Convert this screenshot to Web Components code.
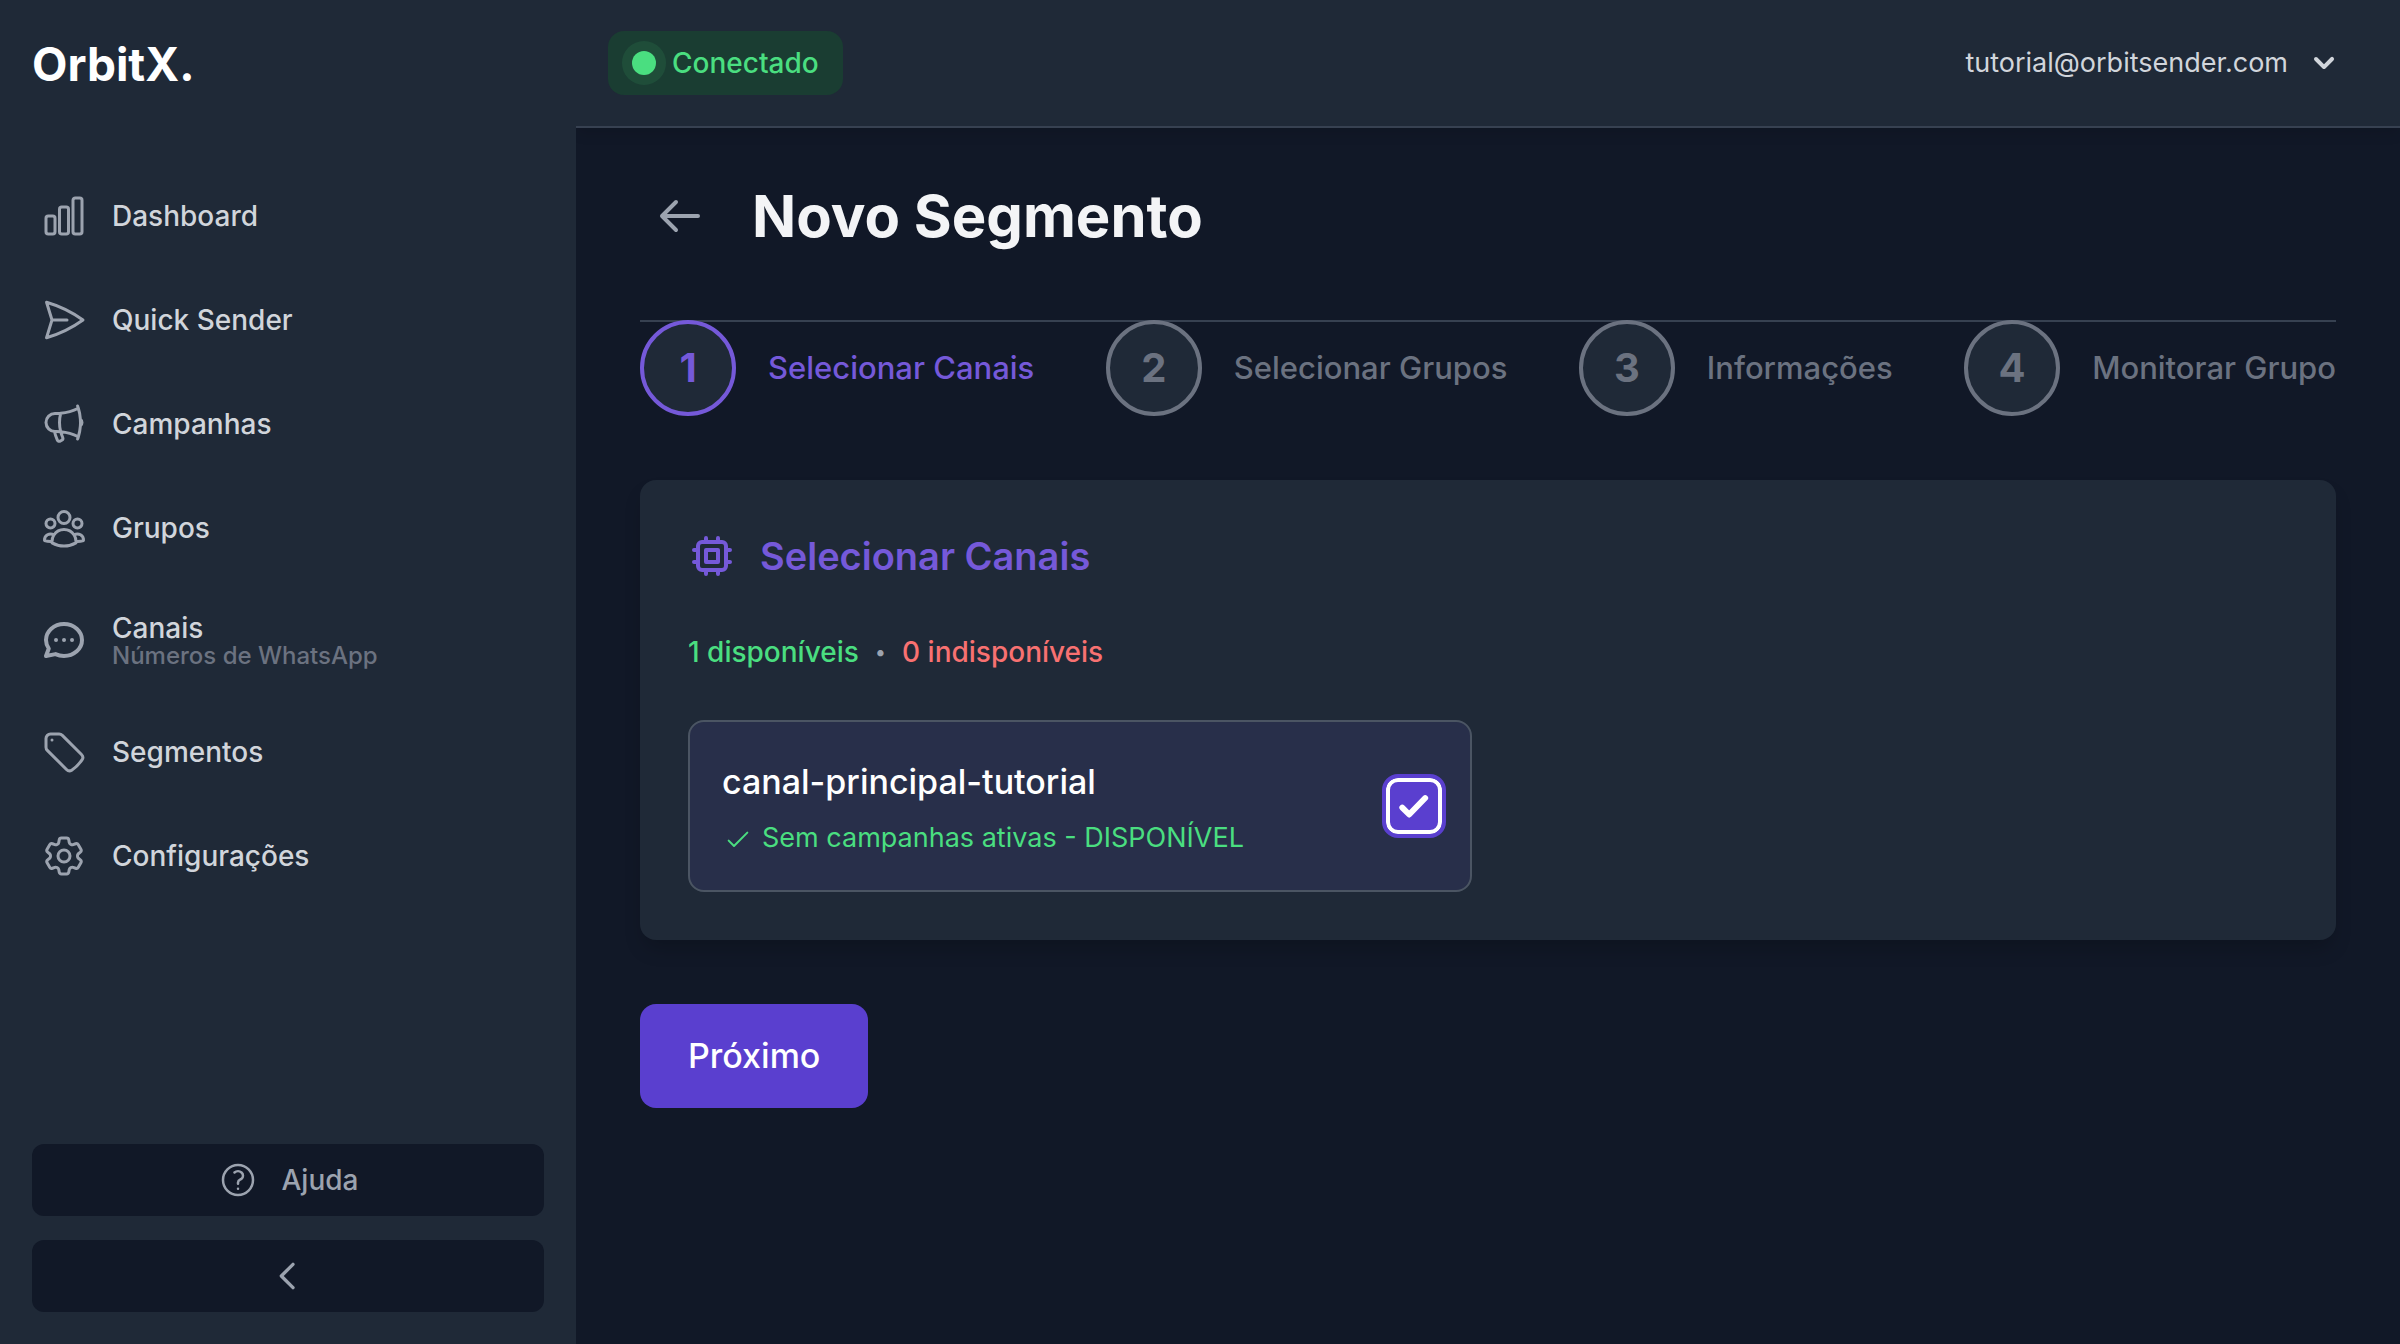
<!DOCTYPE html>
<html lang="pt-BR">
<head>
<meta charset="utf-8">
<title>OrbitX</title>
<style>
  html, body {
    margin: 0;
    min-height: 100vh;
    background: #111827;
    color: #d1d5db;
    font-family: Inter, "Liberation Sans", sans-serif;
    font-size: 28px;
    line-height: 40px;
  }
</style>
</head>
<body>
<app-shell>
  <side-bar slot="sidebar">
    <nav-item icon="chart">Dashboard</nav-item>
    <nav-item icon="send">Quick Sender</nav-item>
    <nav-item icon="megaphone">Campanhas</nav-item>
    <nav-item icon="users">Grupos</nav-item>
    <nav-item icon="chat" hint="Números de WhatsApp">Canais</nav-item>
    <nav-item icon="tag">Segmentos</nav-item>
    <nav-item icon="cog">Configurações</nav-item>
  </side-bar>
  <top-bar slot="header" email="tutorial@orbitsender.com">Conectado</top-bar>
  <page-title>Novo Segmento</page-title>
  <step-list>
    <step-item number="1" active>Selecionar Canais</step-item>
    <step-item number="2">Selecionar Grupos</step-item>
    <step-item number="3">Informações</step-item>
    <step-item number="4">Monitorar Grupo</step-item>
  </step-list>
  <channel-panel heading="Selecionar Canais" available="1" unavailable="0">
    <channel-card name="canal-principal-tutorial">Sem campanhas ativas - DISPONÍVEL</channel-card>
  </channel-panel>
  <primary-button>Próximo</primary-button>
</app-shell>

<script>
const ICONS = {
  chart: '<path d="M3 13.125C3 12.504 3.504 12 4.125 12h2.25c.621 0 1.125.504 1.125 1.125v6.75C7.5 20.496 6.996 21 6.375 21h-2.25A1.125 1.125 0 0 1 3 19.875v-6.75ZM9.75 8.625c0-.621.504-1.125 1.125-1.125h2.25c.621 0 1.125.504 1.125 1.125v11.25c0 .621-.504 1.125-1.125 1.125h-2.25a1.125 1.125 0 0 1-1.125-1.125V8.625ZM16.5 4.125c0-.621.504-1.125 1.125-1.125h2.25C20.496 3 21 3.504 21 4.125v15.75c0 .621-.504 1.125-1.125 1.125h-2.25a1.125 1.125 0 0 1-1.125-1.125V4.125Z"/>',
  send: '<path d="M6 12 3.269 3.125A59.769 59.769 0 0 1 21.485 12 59.768 59.768 0 0 1 3.27 20.875L5.999 12Zm0 0h7.5"/>',
  megaphone: '<path d="M10.34 15.84c-.688-.06-1.386-.09-2.09-.09H7.5a4.5 4.5 0 1 1 0-9h.75c.704 0 1.402-.03 2.09-.09m0 9.18c.253.962.584 1.892.985 2.783.247.55.06 1.21-.463 1.511l-.657.38c-.551.318-1.26.117-1.527-.461a20.845 20.845 0 0 1-1.44-4.282m3.102.069a18.03 18.03 0 0 1-.59-4.59c0-1.586.205-3.124.59-4.59m0 9.18a23.848 23.848 0 0 1 8.835 2.535M10.34 6.66a23.847 23.847 0 0 0 8.835-2.535m0 0A23.74 23.74 0 0 0 18.795 3m.38 1.125a23.91 23.91 0 0 1 1.014 5.395m-1.014 8.855c-.118.38-.245.754-.38 1.125m.38-1.125a23.91 23.91 0 0 0 1.014-5.395m0-3.46c.495.413.811 1.035.811 1.73 0 .695-.316 1.317-.811 1.73m0-3.46a24.347 24.347 0 0 1 0 3.46"/>',
  users: '<path d="M18 18.72a9.094 9.094 0 0 0 3.741-.479 3 3 0 0 0-4.682-2.72m.94 3.198.001.031c0 .225-.012.447-.037.666A11.944 11.944 0 0 1 12 21c-2.17 0-4.207-.576-5.963-1.584A6.062 6.062 0 0 1 6 18.719m12 0a5.971 5.971 0 0 0-.941-3.197m0 0A5.995 5.995 0 0 0 12 12.75a5.995 5.995 0 0 0-5.058 2.772m0 0a3 3 0 0 0-4.681 2.72 8.986 8.986 0 0 0 3.74.477m.94-3.197a5.971 5.971 0 0 0-.94 3.197M15 6.75a3 3 0 1 1-6 0 3 3 0 0 1 6 0Zm6 3a2.25 2.25 0 1 1-4.5 0 2.25 2.25 0 0 1 4.5 0Zm-13.5 0a2.25 2.25 0 1 1-4.5 0 2.25 2.25 0 0 1 4.5 0Z"/>',
  chat: '<path stroke-width="2" d="M8 12h.01M12 12h.01M16 12h.01M21 12c0 4.418-4.03 8-9 8a9.863 9.863 0 0 1-4.255-.949L3 20l1.395-3.72C3.512 15.042 3 13.574 3 12c0-4.418 4.03-8 9-8s9 3.582 9 8Z"/>',
  tag: '<path d="M9.568 3H5.25A2.25 2.25 0 0 0 3 5.25v4.318c0 .597.237 1.17.659 1.591l9.581 9.581c.699.699 1.78.872 2.607.33a18.095 18.095 0 0 0 5.223-5.223c.542-.827.369-1.908-.33-2.607L11.16 3.66A2.25 2.25 0 0 0 9.568 3Z"/><path d="M6 6h.008v.008H6V6Z"/>',
  cog: '<path d="M9.594 3.94c.09-.542.56-.94 1.11-.94h2.593c.55 0 1.02.398 1.11.94l.213 1.281c.063.374.313.686.645.87.074.04.147.083.22.127.325.196.72.257 1.075.124l1.217-.456a1.125 1.125 0 0 1 1.37.49l1.296 2.247a1.125 1.125 0 0 1-.26 1.431l-1.003.827c-.293.241-.438.613-.43.992a7.723 7.723 0 0 1 0 .255c-.008.378.137.75.43.991l1.004.827c.424.35.534.955.26 1.43l-1.298 2.247a1.125 1.125 0 0 1-1.369.491l-1.217-.456c-.355-.133-.75-.072-1.076.124a6.47 6.47 0 0 1-.22.128c-.331.183-.581.495-.644.869l-.213 1.281c-.09.543-.56.94-1.11.94h-2.594c-.55 0-1.019-.398-1.11-.94l-.213-1.281c-.062-.374-.312-.686-.644-.87a6.52 6.52 0 0 1-.22-.127c-.325-.196-.72-.257-1.076-.124l-1.217.456a1.125 1.125 0 0 1-1.369-.49l-1.297-2.247a1.125 1.125 0 0 1 .26-1.431l1.004-.827c.292-.24.437-.613.43-.991a6.932 6.932 0 0 1 0-.255c.007-.38-.138-.751-.43-.992l-1.004-.827a1.125 1.125 0 0 1-.26-1.43l1.297-2.247a1.125 1.125 0 0 1 1.37-.491l1.216.456c.356.133.751.072 1.076-.124.072-.044.146-.086.22-.128.332-.183.582-.495.644-.869l.214-1.28Z"/><path d="M15 12a3 3 0 1 1-6 0 3 3 0 0 1 6 0Z"/>',
  help: '<path d="M9.879 7.519c1.171-1.025 3.071-1.025 4.242 0 1.172 1.025 1.172 2.687 0 3.712-.203.179-.43.326-.67.442-.745.361-1.45.999-1.45 1.827v.75M21 12a9 9 0 1 1-18 0 9 9 0 0 1 18 0Zm-9 5.25h.008v.008H12v-.008Z"/>',
  left: '<path stroke-width="2" d="m15 19-7-7 7-7"/>',
  back: '<path stroke-width="2" d="m10 19-7-7m0 0 7-7m-7 7h18"/>',
  down: '<path fill="currentColor" stroke="none" d="M6.352 8.752a1.2 1.2 0 0 1 1.696 0L12 12.703l3.952-3.951a1.2 1.2 0 1 1 1.696 1.696l-4.8 4.8a1.2 1.2 0 0 1-1.696 0l-4.8-4.8a1.2 1.2 0 0 1 0-1.696Z"/>',
  chip: '<path stroke-width="2" d="M9 3v2m6-2v2M9 19v2m6-2v2M5 9H3m2 6H3m18-6h-2m2 6h-2M7 19h10a2 2 0 0 0 2-2V7a2 2 0 0 0-2-2H7a2 2 0 0 0-2 2v10a2 2 0 0 0 2 2ZM9 9h6v6H9V9Z"/>',
  check: '<path d="m5 14 4 4L19 8"/>',
  tick: '<path stroke-width="2.2" d="m7.6 12.6 2.6 2.6L16.2 9"/>'
};

// Small base: writes the template into an open shadow root
class BaseElement extends HTMLElement {
  constructor() {
    super();
    this.attachShadow({ mode: 'open' });
  }

  connectedCallback() {
    this.shadowRoot.innerHTML = this.render();
  }
}

class SvgIcon extends BaseElement {
  render() {
    return `
      <style>
        :host { display: block; flex: none; width: 48px; height: 48px; }
        svg { display: block; width: 100%; height: 100%; }
      </style>
      <svg viewBox="0 0 24 24" fill="none" stroke="currentColor" stroke-width="1.5"
        stroke-linecap="round" stroke-linejoin="round" aria-hidden="true">${ICONS[this.getAttribute('name')]}</svg>
    `;
  }
}

class AppShell extends BaseElement {
  render() {
    return `
      <style>
        :host { display: grid; grid-template-columns: 576px 1fr; min-height: 100vh; }
        .content { display: flex; flex-direction: column; min-width: 0; }
        main {
          display: flex;
          flex-direction: column;
          padding: 48px 64px;
        }
      </style>
      <slot name="sidebar"></slot>
      <div class="content">
        <slot name="header"></slot>
        <main><slot></slot></main>
      </div>
    `;
  }
}

class SideBar extends BaseElement {
  render() {
    return `
      <style>
        :host {
          display: flex;
          flex-direction: column;
          box-sizing: border-box;
          padding: 32px;
          background: #1f2937;
          z-index: 1;
        }
        .logo {
          color: #fff;
          font-size: 46px;
          line-height: 64px;
          font-weight: 700;
          text-decoration: none;
        }
        nav { display: flex; flex-direction: column; gap: 16px; margin-top: 76px; }
        .actions { display: flex; flex-direction: column; gap: 24px; margin-top: auto; }
        button {
          display: flex;
          align-items: center;
          justify-content: center;
          gap: 24px;
          height: 72px;
          border: 0;
          border-radius: 12px;
          background: #111827;
          color: #9ca3af;
          font: inherit;
          font-weight: 500;
          cursor: pointer;
        }
        svg-icon { width: 40px; height: 40px; }
      </style>
      <a class="logo" href="#">OrbitX.</a>
      <nav><slot></slot></nav>
      <div class="actions">
        <button type="button"><svg-icon name="help"></svg-icon>Ajuda</button>
        <button type="button" aria-label="Recolher menu"><svg-icon name="left"></svg-icon></button>
      </div>
    `;
  }
}

class NavItem extends BaseElement {
  render() {
    const hint = this.getAttribute('hint');
    return `
      <style>
        :host { display: block; }
        a {
          display: flex;
          align-items: center;
          gap: 24px;
          padding: 20px 8px;
          color: #d1d5db;
          font-weight: 500;
          text-decoration: none;
        }
        svg-icon { color: #9ca3af; }
        .text { display: flex; flex-direction: column; }
        .text.double { padding: 4px 0; line-height: 32px; }
        small { color: #6b7280; font-size: 24px; line-height: 24px; }
      </style>
      <a href="#">
        <svg-icon name="${this.getAttribute('icon')}"></svg-icon>
        <span class="text ${hint ? 'double' : ''}">
          <slot></slot>
          ${hint ? `<small>${hint}</small>` : ''}
        </span>
      </a>
    `;
  }
}

class TopBar extends BaseElement {
  render() {
    return `
      <style>
        :host {
          display: flex;
          align-items: center;
          justify-content: space-between;
          box-sizing: border-box;
          height: 128px;
          padding: 0 56px 0 32px;
          border-bottom: 2px solid #374151;
          background: #1f2937;
          box-shadow: 0 8px 12px -2px rgba(0, 0, 0, 0.1);
        }
        .status {
          display: flex;
          align-items: center;
          gap: 16px;
          padding: 12px 24px;
          border-radius: 16px;
          background: #1a3d32;
          color: #4ade80;
          font-weight: 500;
        }
        .dot {
          width: 24px;
          height: 24px;
          border-radius: 50%;
          background: #4ade80;
          box-shadow: 0 0 0 10px rgba(74, 222, 128, 0.1);
        }
        button {
          display: flex;
          align-items: center;
          gap: 16px;
          padding: 0;
          border: 0;
          background: none;
          color: #d1d5db;
          font: inherit;
          font-size: 27px;
          cursor: pointer;
        }
        svg-icon { width: 40px; height: 40px; }
      </style>
      <div class="status"><span class="dot"></span><slot></slot></div>
      <button type="button">${this.getAttribute('email')}<svg-icon name="down"></svg-icon></button>
    `;
  }
}

class PageTitle extends BaseElement {
  render() {
    return `
      <style>
        :host { display: flex; align-items: center; gap: 48px; padding: 0 16px; }
        a { color: #9ca3af; }
        h1 { margin: 0; color: #f3f4f6; font-size: 58px; line-height: 80px; font-weight: 700; }
      </style>
      <a href="#" aria-label="Voltar"><svg-icon name="back"></svg-icon></a>
      <h1><slot></slot></h1>
    `;
  }
}

class StepList extends BaseElement {
  render() {
    return `
      <style>
        :host {
          display: flex;
          justify-content: space-between;
          margin-top: 64px;
          background: linear-gradient(#374151, #374151) top / 100% 2px no-repeat;
        }
      </style>
      <slot></slot>
    `;
  }
}

class StepItem extends BaseElement {
  render() {
    return `
      <style>
        :host {
          display: flex;
          align-items: center;
          gap: 32px;
          color: #6b7280;
          font-size: 31px;
          font-weight: 500;
        }
        :host([active]) { color: #7559d9; }
        .circle {
          display: flex;
          align-items: center;
          justify-content: center;
          box-sizing: border-box;
          width: 96px;
          height: 96px;
          border: 4px solid;
          border-radius: 50%;
          background: #1f2937;
          font-size: 40px;
          font-weight: 700;
        }
      </style>
      <span class="circle">${this.getAttribute('number')}</span>
      <slot></slot>
    `;
  }
}

class ChannelPanel extends BaseElement {
  render() {
    return `
      <style>
        :host {
          display: block;
          margin-top: 64px;
          padding: 48px;
          border-radius: 16px;
          background: #1f2937;
          box-shadow: 0 12px 20px -4px rgba(0, 0, 0, 0.2);
        }
        h2 {
          display: flex;
          align-items: center;
          gap: 24px;
          margin: 0;
          color: #7559d9;
          font-size: 38px;
          line-height: 56px;
          font-weight: 600;
        }
        .counts { display: flex; gap: 16px; margin-top: 48px; color: #9ca3af; }
        .ok { color: #4ade80; font-weight: 500; }
        .bad { color: #f87171; font-weight: 500; }
        .separator { font-size: 20px; }
        .grid {
          display: grid;
          grid-template-columns: 1fr 1fr;
          gap: 32px;
          margin-top: 48px;
        }
      </style>
      <h2><svg-icon name="chip"></svg-icon>${this.getAttribute('heading')}</h2>
      <div class="counts">
        <span class="ok">${this.getAttribute('available')} disponíveis</span>
        <span class="separator">•</span>
        <span class="bad">${this.getAttribute('unavailable')} indisponíveis</span>
      </div>
      <div class="grid"><slot></slot></div>
    `;
  }
}

class ChannelCard extends BaseElement {
  render() {
    return `
      <style>
        :host { display: block; }
        label {
          display: flex;
          align-items: center;
          justify-content: space-between;
          padding: 32px 24px 32px 32px;
          border: 2px solid #4b5563;
          border-radius: 16px;
          background: #282f4a;
          cursor: pointer;
        }
        .name { color: #fff; font-size: 34px; line-height: 56px; font-weight: 500; }
        .state {
          display: flex;
          align-items: center;
          gap: 8px;
          margin-top: 8px;
          color: #4ade80;
          font-size: 27px;
        }
        .state svg-icon { width: 32px; height: 32px; }
        .box { display: grid; flex: none; }
        .box > * { grid-area: 1 / 1; }
        .box svg-icon { width: 64px; height: 64px; color: #fff; pointer-events: none; }
        input {
          appearance: none;
          width: 64px;
          height: 64px;
          margin: 0;
          border: 4px solid #5a3fcf;
          border-radius: 16px;
          box-shadow: inset 0 0 0 4px #fff;
          cursor: pointer;
        }
        input:checked { background: #5a3fcf; }
        input:not(:checked) + svg-icon { visibility: hidden; }
      </style>
      <label>
        <span>
          <div class="name">${this.getAttribute('name')}</div>
          <div class="state"><svg-icon name="check"></svg-icon><slot></slot></div>
        </span>
        <span class="box">
          <input type="checkbox" checked>
          <svg-icon name="tick"></svg-icon>
        </span>
      </label>
    `;
  }
}

class PrimaryButton extends BaseElement {
  render() {
    return `
      <style>
        :host { display: block; margin-top: 64px; }
        button {
          padding: 24px 48px;
          border: 0;
          border-radius: 16px;
          background: #5a3fcf;
          color: #fff;
          font: inherit;
          font-size: 34px;
          line-height: 56px;
          font-weight: 500;
          cursor: pointer;
        }
      </style>
      <button type="button"><slot></slot></button>
    `;
  }
}

customElements.define('svg-icon', SvgIcon);
customElements.define('app-shell', AppShell);
customElements.define('side-bar', SideBar);
customElements.define('nav-item', NavItem);
customElements.define('top-bar', TopBar);
customElements.define('page-title', PageTitle);
customElements.define('step-list', StepList);
customElements.define('step-item', StepItem);
customElements.define('channel-panel', ChannelPanel);
customElements.define('channel-card', ChannelCard);
customElements.define('primary-button', PrimaryButton);
</script>
</body>
</html>
